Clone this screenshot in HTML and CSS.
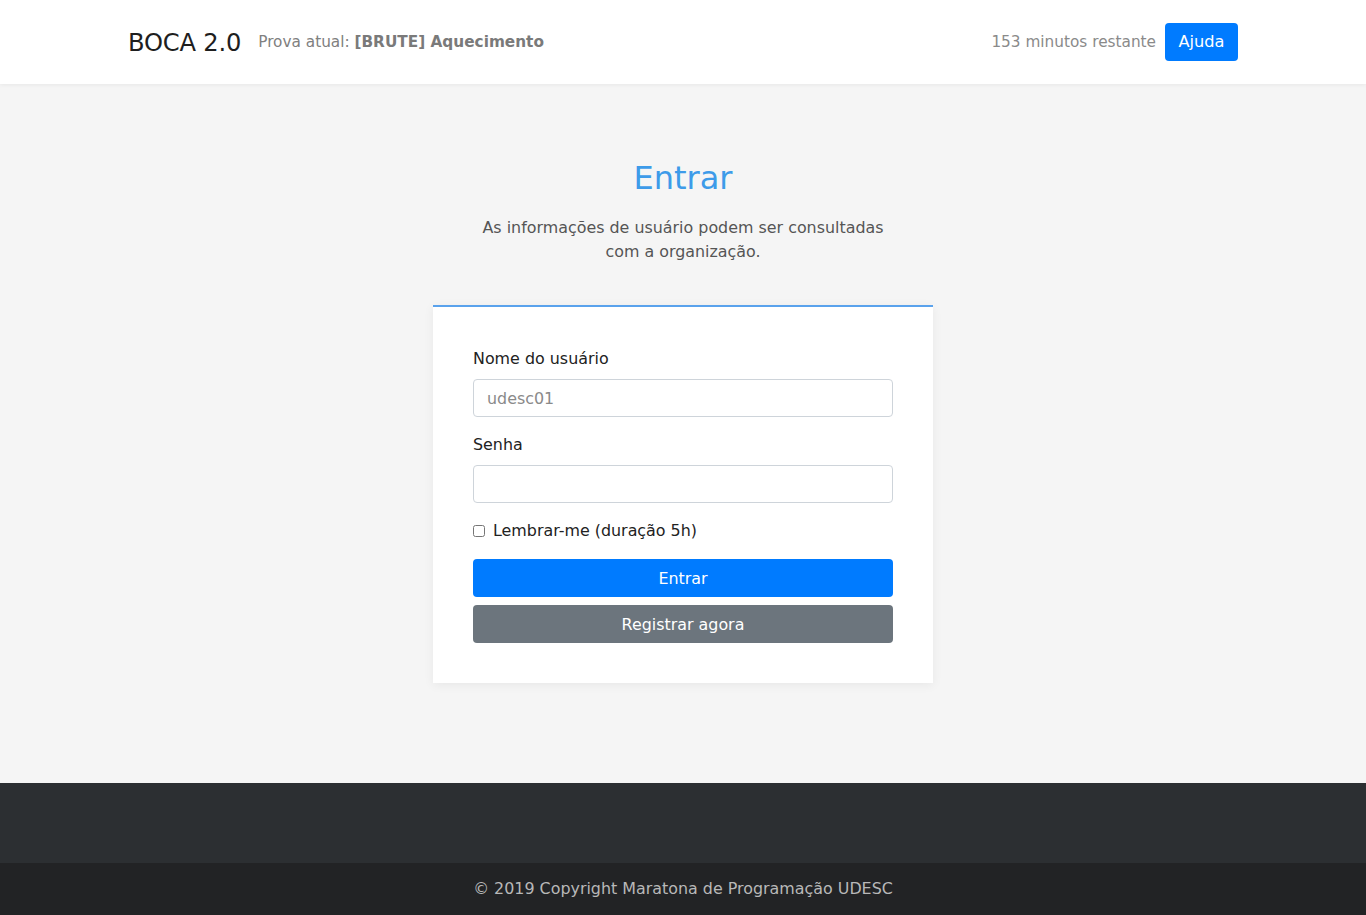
FILE: index.html
```html
<!DOCTYPE html>
<html lang="pt-BR">
<head>
<meta charset="utf-8">
<title>BOCA 2.0 - Entrar</title>
<link rel="stylesheet" href="styles.css">
</head>
<body>
<header class="topbar">
  <div class="container topbar-inner">
    <div class="brand-group">
      <span class="brand">BOCA 2.0</span>
      <span class="contest">Prova atual: <strong>[BRUTE] Aquecimento</strong></span>
    </div>
    <div class="right-group">
      <span class="timer">153 minutos restante</span>
      <a class="btn btn-primary btn-help" href="#">Ajuda</a>
    </div>
  </div>
</header>

<main class="main">
  <h1 class="title">Entrar</h1>
  <p class="subtitle">As informações de usuário podem ser consultadas<br>com a organização.</p>

  <form class="card">
    <div class="form-group">
      <label class="label" for="user">Nome do usuário</label>
      <input class="input" id="user" type="text" placeholder="udesc01">
    </div>
    <div class="form-group">
      <label class="label" for="pass">Senha</label>
      <input class="input" id="pass" type="password">
    </div>
    <div class="check-row">
      <input class="check" id="remember" type="checkbox">
      <label class="check-label" for="remember">Lembrar-me (duração 5h)</label>
    </div>
    <button class="btn btn-primary btn-block" type="button">Entrar</button>
    <button class="btn btn-secondary btn-block" type="button">Registrar agora</button>
  </form>
</main>

<footer class="footer">
  <div class="footer-top"></div>
  <div class="footer-bottom">© 2019 Copyright Maratona de Programação UDESC</div>
</footer>
</body>
</html>
```

FILE: styles.css
```css
* { box-sizing: border-box; }

html, body {
  margin: 0;
  padding: 0;
}

body {
  font-family: "DejaVu Sans", "Noto Sans", sans-serif;
  font-size: 15.9px;
  line-height: 24px;
  color: #212529;
  background: #f5f5f5;
}

.container {
  width: 1140px;
  margin: 0 auto;
  padding: 0 15px;
}

/* Header */
.topbar {
  background: #fff;
  height: 84px;
  box-shadow: 0 1px 4px rgba(0, 0, 0, 0.06);
  position: relative;
}

.topbar-inner {
  height: 84px;
  display: flex;
  align-items: center;
  justify-content: space-between;
}

.brand-group {
  display: flex;
  align-items: center;
  gap: 17px;
}

.brand {
  font-size: 24.2px;
  line-height: 30px;
  color: #1e1e1e;
  font-weight: 400;
  letter-spacing: -0.2px;
  padding-top: 1px;
}

.contest {
  color: #808080;
  font-size: 15.3px;
}

.contest strong {
  font-weight: 700;
  color: #7a7a7a;
}

.right-group {
  display: flex;
  align-items: center;
  gap: 9px;
}

.timer {
  color: #8a8a8a;
  font-size: 15.3px;
}

.btn {
  display: inline-flex;
  align-items: center;
  justify-content: center;
  height: 38px;
  border: none;
  border-radius: 4px;
  font-family: inherit;
  font-size: 15.9px;
  color: #fff;
  text-decoration: none;
  cursor: pointer;
}

.btn-primary { background: #007bff; }
.btn-secondary { background: #6c757d; }

.btn-help {
  width: 73px;
  font-size: 16.2px;
}

/* Main */
.main {
  display: flex;
  flex-direction: column;
  align-items: center;
  padding: 73px 0 100px;
}

.title {
  margin: 0;
  font-size: 32px;
  line-height: 43px;
  font-weight: 400;
  color: #3d9be9;
}

.subtitle {
  margin: 16px 0 0;
  text-align: center;
  color: #555;
}

.card {
  width: 500px;
  margin-top: 41px;
  background: #fff;
  border-top: 2px solid #5aa2ec;
  padding: 40px;
  box-shadow: 0 2px 10px rgba(0, 0, 0, 0.06);
  display: flex;
  flex-direction: column;
}

.form-group {
  display: flex;
  flex-direction: column;
  margin-bottom: 16px;
}

.label {
  color: #222;
  margin-bottom: 8px;
}

.input {
  height: 38px;
  border: 1px solid #ced4da;
  border-radius: 4px;
  padding: 0 13px;
  font-family: inherit;
  font-size: 15.9px;
  color: #495057;
  background: #fff;
}

.input::placeholder {
  color: #8a8a8a;
}

.check-row {
  display: flex;
  align-items: center;
  height: 24px;
  margin-bottom: 16px;
}

.check {
  width: 12px;
  height: 12px;
  margin: 0 8px 0 0;
}

.check-label {
  color: #222;
}

.btn-block {
  width: 100%;
}

.btn-block + .btn-block {
  margin-top: 8px;
}

/* Footer */
.footer-top {
  height: 80px;
  background: #2c2f32;
}

.footer-bottom {
  height: 52px;
  background: #222325;
  color: #b8b8b8;
  display: flex;
  align-items: center;
  justify-content: center;
}
```
